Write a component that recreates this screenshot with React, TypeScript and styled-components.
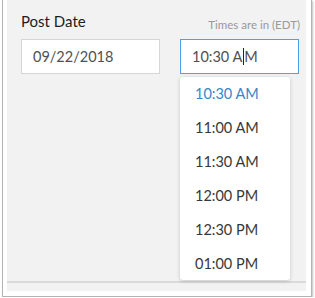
import styled, { createGlobalStyle } from "styled-components";

const GlobalStyle = createGlobalStyle`
  html, body {
    margin: 0;
    padding: 0;
    background: #ffffff;
  }
  body {
    font-family: Lato, "Open Sans", sans-serif;
  }
`;

const times = ["10:30 AM", "11:00 AM", "11:30 AM", "12:00 PM", "12:30 PM", "01:00 PM"];

export default function App() {
  return (
    <>
      <GlobalStyle />
      <Frame>
        <Panel>
          <Body>
            <HeaderRow>
              <Label>Post Date</Label>
              <Hint>Times are in (EDT)</Hint>
            </HeaderRow>
            <Fields>
              <Input>09/22/2018</Input>
              <TimeField>
                <Input $focused>
                  10:30 A<Caret />M
                </Input>
                <Dropdown>
                  {times.map((t, i) => (
                    <Option key={t} $selected={i === 0}>
                      {t}
                    </Option>
                  ))}
                </Dropdown>
              </TimeField>
            </Fields>
          </Body>
          <Footer />
        </Panel>
      </Frame>
    </>
  );
}

const Frame = styled.div`
  box-sizing: border-box;
  margin-left: 2px;
  width: 310px;
  height: 297px;
  padding: 0 5px 5px 4px;
  border: 1px solid #b4b4b4;
  border-top: none;
  box-shadow: 1px 1px 2px rgba(0, 0, 0, 0.25);
  background: #ffffff;
`;

const Panel = styled.div`
  display: flex;
  flex-direction: column;
  height: 100%;
  background: #f2f2f2;
`;

const Body = styled.div`
  flex: 1;
  padding: 12px 6px 0 14px;
`;

const HeaderRow = styled.div`
  display: flex;
  justify-content: space-between;
  align-items: flex-start;
  height: 20px;
`;

const Label = styled.div`
  font-size: 15px;
  line-height: 18px;
  color: #1e1e1e;
`;

const Hint = styled.div`
  font-size: 11.5px;
  line-height: 14px;
  color: #999999;
  margin-top: 6px;
`;

const Fields = styled.div`
  display: grid;
  grid-template-columns: 139px 119px;
  column-gap: 20px;
  margin-top: 7px;
`;

const TimeField = styled.div`
  position: relative;
`;

const Input = styled.div<{ $focused?: boolean }>`
  box-sizing: border-box;
  height: 35px;
  display: flex;
  align-items: center;
  padding-left: 11px;
  background: #ffffff;
  border: 1px solid ${(p) => (p.$focused ? "#4da0ee" : "#d6d6d6")};
  font-size: 14.5px;
  color: #505050;
  white-space: pre;
`;

const Caret = styled.span`
  display: inline-block;
  width: 1px;
  height: 17px;
  background: #222;
  margin: 0 0 0 1px;
`;

const Dropdown = styled.div`
  position: absolute;
  top: 38px;
  left: 0;
  width: 110px;
  height: 203px;
  overflow: hidden;
  background: #ffffff;
  border-radius: 3px;
  box-shadow: 0 1px 4px rgba(0, 0, 0, 0.18);
  z-index: 2;
`;

const Option = styled.div<{ $selected?: boolean }>`
  height: 34px;
  line-height: 34px;
  padding-left: 15px;
  font-size: 14.5px;
  color: ${(p) => (p.$selected ? "#3a86c8" : "#383838")};
`;

const Footer = styled.div`
  height: 7px;
  margin-bottom: 1px;
  border-top: 2px solid #dadada;
  background: #f2f2f2;
`;
